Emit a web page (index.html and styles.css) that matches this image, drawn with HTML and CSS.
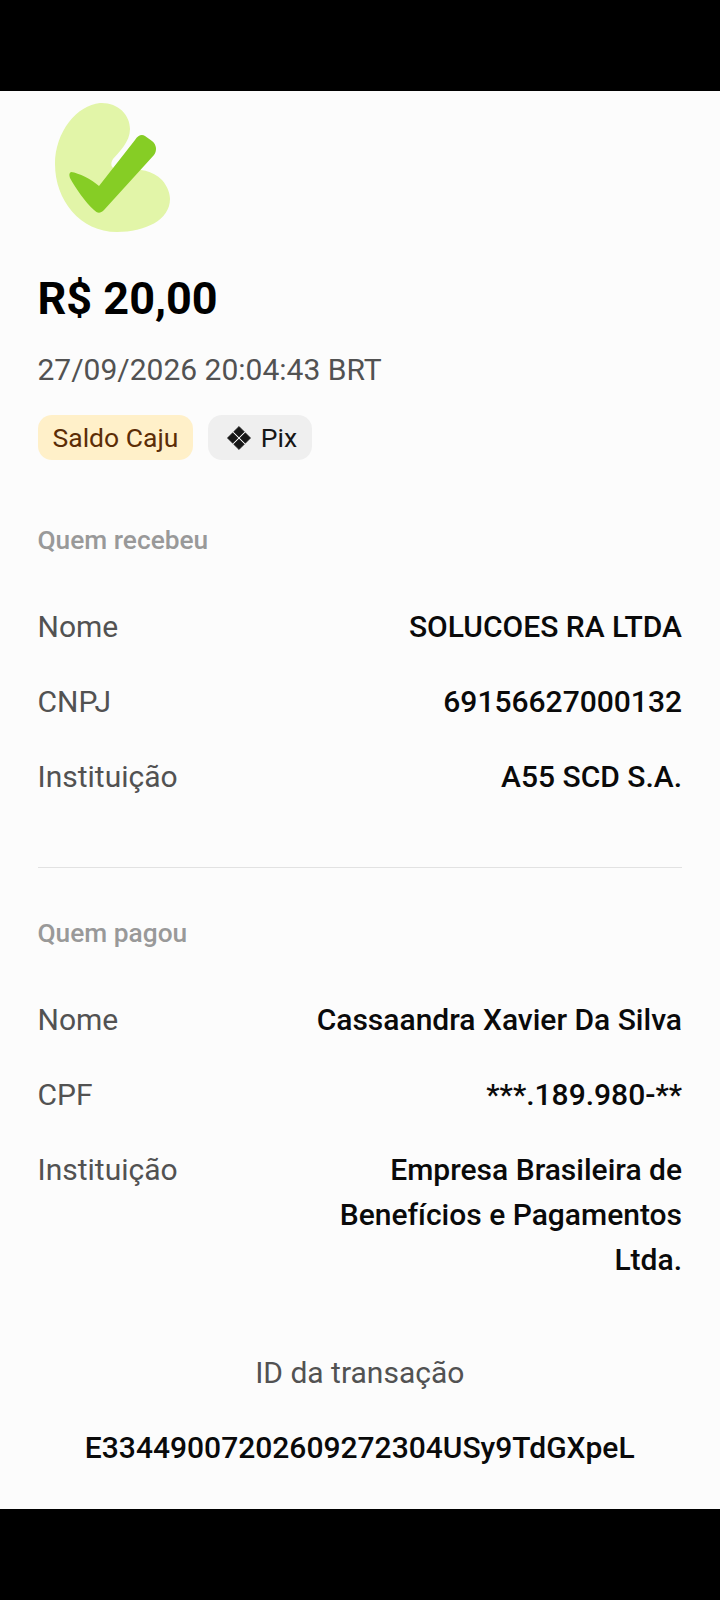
FILE: index.html
```html
<!DOCTYPE html>
<html lang="pt-BR">
<head>
<meta charset="utf-8">
<title>Comprovante</title>
<link rel="stylesheet" href="styles.css">
</head>
<body>
<div class="bar"></div>
<main class="screen">
  <svg class="check" viewBox="0 0 130 135" width="130" height="135" aria-hidden="true">
    <path class="blob" d="M45 1C62 0 75 12 75 27C75 40 64 50 58 57C55 62 56 66 61 67C75 67 95 65 107 78C113 85 115 92 115 97C115 118 90 130 62 130C25 130 0 98 0 62C0 30 22 3 45 1Z"/>
    <path class="tick" d="M16 70C24 71 36 77 44 84L80 38C83 33 87 32 90 34L97 39C102 43 102 49 99 53L49 108C45 112 42 111 39 108C30 100 20 85 15 76C14 73 14 71 16 70Z"/>
  </svg>
  <h1 class="amount">R$ 20,00</h1>
  <p class="date">27/09/2026 20:04:43 BRT</p>
  <div class="chips">
    <span class="chip chip-saldo">Saldo Caju</span>
    <span class="chip chip-pix">
      <svg class="pix" viewBox="0 0 26 26" width="26" height="26" aria-hidden="true">
        <path d="M13 1.4 18.3 6.7 13 12 7.7 6.7Z"/>
        <path d="M19.3 7.7 24.6 13 19.3 18.3 14 13Z"/>
        <path d="M6.7 7.7 12 13 6.7 18.3 1.4 13Z"/>
        <path d="M13 14 18.3 19.3 13 24.6 7.7 19.3Z"/>
      </svg>
      Pix
    </span>
  </div>

  <section class="group first">
    <h2 class="group-title">Quem recebeu</h2>
    <div class="row"><span class="key">Nome</span><span class="val">SOLUCOES RA LTDA</span></div>
    <div class="row"><span class="key">CNPJ</span><span class="val">69156627000132</span></div>
    <div class="row"><span class="key">Instituição</span><span class="val">A55 SCD S.A.</span></div>
  </section>

  <hr class="rule">

  <section class="group">
    <h2 class="group-title">Quem pagou</h2>
    <div class="row"><span class="key">Nome</span><span class="val">Cassaandra Xavier Da Silva</span></div>
    <div class="row"><span class="key">CPF</span><span class="val">***.189.980-**</span></div>
    <div class="row"><span class="key">Instituição</span><span class="val val-wrap">Empresa Brasileira de Benefícios e Pagamentos Ltda.</span></div>
  </section>

  <section class="txid">
    <p class="key">ID da transação</p>
    <p class="val">E33449007202609272304USy9TdGXpeL</p>
  </section>
</main>
<div class="bar bar-bottom"></div>
</body>
</html>
```

FILE: styles.css
```css
* { box-sizing: border-box; }
html, body { margin: 0; padding: 0; }
body {
  width: 720px;
  height: 1600px;
  background: #000;
  font-family: Roboto, "Liberation Sans", sans-serif;
  display: flex;
  flex-direction: column;
  overflow: hidden;
}
.bar { height: 91px; background: #000; flex: none; }
.bar-bottom { flex: 1; }
.screen {
  height: 1418px;
  flex: none;
  background: #fcfcfc;
  padding: 11px 38px 0 37.5px;
}
.check { display: block; margin-left: 17.5px; }
.blob { fill: #e2f5a8; }
.tick { fill: #86cd25; }
.amount {
  margin: 32px 0 0;
  font-size: 45px;
  line-height: 60px;
  font-weight: 700;
  color: #000;
}
.date {
  margin: 22px 0 0;
  font-size: 30px;
  line-height: 38px;
  color: #525252;
}
.chips { display: flex; gap: 15px; margin-top: 26px; }
.chip {
  height: 45px;
  padding: 0 15px;
  border-radius: 14px;
  font-size: 26.5px;
  display: flex;
  align-items: center;
  font-weight: 400;
}
.chip-saldo { background: #fff0c9; color: #5c2d06; }
.chip-pix { background: #efefef; color: #161616; gap: 9px; padding: 0 15px 0 17.5px; }
.pix { fill: #161616; stroke: #161616; stroke-width: 0.6; stroke-linejoin: round; flex: none; }
.group.first { margin-top: 62px; }
.group-title {
  margin: 0 0 46px;
  font-size: 26.3px;
  line-height: 36px;
  font-weight: 500;
  color: #999;
}
.row {
  display: flex;
  justify-content: space-between;
  align-items: flex-start;
  gap: 40px;
  font-size: 30px;
  line-height: 45px;
  margin-bottom: 30px;
}
.key { color: #525252; flex: none; }
.val { color: #0a0a0a; font-weight: 500; text-align: right; }
.val-wrap { width: 360px; }
.rule {
  border: 0;
  height: 1px;
  background: #e2e2e2;
  margin: 68px 0 0;
}
.group:not(.first) { margin-top: 47px; }
.txid { text-align: center; margin-top: 68px; }
.txid p { margin: 0; font-size: 30px; line-height: 45px; }
.txid .val { margin-top: 30px; text-align: center; }
```
